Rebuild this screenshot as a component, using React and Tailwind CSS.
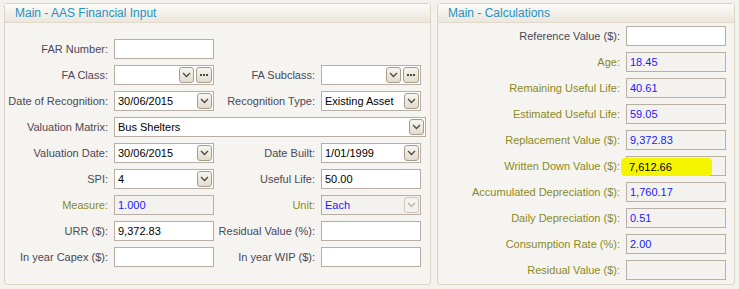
import React from "react";

const font = { fontFamily: '"Liberation Sans", Arial, sans-serif' };

// small chevron for the combo buttons
const Chevron = ({ disabled }) => (
  <svg width="9" height="6" viewBox="0 0 9 6">
    <path
      d="M1 1 L4.5 4.5 L8 1"
      fill="none"
      stroke={disabled ? "#b5b0a8" : "#4b4845"}
      strokeWidth="1.3"
    />
  </svg>
);

const DropButton = ({ disabled }) => (
  <div
    className={
      "flex h-[16px] w-[15px] items-center justify-center rounded-[3px] border " +
      (disabled
        ? "border-[#cdc6bc] bg-[#f4f2ee]"
        : "border-[#a89c8c] bg-gradient-to-b from-[#f7f5ef] to-[#e2dccf]")
    }
  >
    <Chevron disabled={disabled} />
  </div>
);

const DotsButton = () => (
  <div className="flex h-[16px] w-[16px] items-center justify-center gap-[1px] rounded-[3px] border border-[#a89c8c] bg-gradient-to-b from-[#f7f5ef] to-[#e2dccf]">
    <span className="h-[2px] w-[2px] bg-[#4b4845]"></span>
    <span className="h-[2px] w-[2px] bg-[#4b4845]"></span>
    <span className="h-[2px] w-[2px] bg-[#4b4845]"></span>
  </div>
);

const Box = ({ value, combo, dots, readonly, disabled, blue, width = "w-[100px]" }) => (
  <div
    className={
      "flex h-[20px] items-center border pl-[3px] pr-[1px] text-[11px] " +
      width +
      " " +
      (readonly || disabled
        ? "border-[#b9aea3] bg-[#f4f2ee]"
        : "border-[#b9aea3] bg-white")
    }
  >
    <span className={"flex-1 truncate " + (blue ? "text-[#1a1aff]" : "text-black")}>
      {value}
    </span>
    {combo && <DropButton disabled={disabled} />}
    {dots && (
      <>
        <span className="w-[2px]"></span>
        <DotsButton />
      </>
    )}
  </div>
);

const Label = ({ text, olive, width }) => (
  <div
    className={
      "text-right text-[11px] " +
      width +
      " " +
      (olive ? "text-[#8a8a1e]" : "text-[#4c4757]")
    }
  >
    {text}
  </div>
);

const Panel = ({ title, className, bodyClass, children }) => (
  <div
    className={
      "flex h-[282px] flex-col rounded-[3px] border border-[#dcd3c4] bg-[#f6f4f0] " +
      className
    }
  >
    <div className="flex h-[19px] shrink-0 items-center border-b border-[#e0d9cc] bg-gradient-to-b from-[#fbfaf7] to-[#ebe7dd] pl-[10px] text-[12px] text-[#2591c6]">
      {title}
    </div>
    <div className={bodyClass}>{children}</div>
  </div>
);

const leftRows = [
  [{ label: "FAR Number:", box: {} }, null],
  [
    { label: "FA Class:", box: { combo: true, dots: true } },
    { label: "FA Subclass:", box: { combo: true, dots: true } },
  ],
  [
    { label: "Date of Recognition:", box: { value: "30/06/2015", combo: true } },
    { label: "Recognition Type:", box: { value: "Existing Asset", combo: true } },
  ],
  "matrix",
  [
    { label: "Valuation Date:", box: { value: "30/06/2015", combo: true } },
    { label: "Date Built:", box: { value: "1/01/1999", combo: true } },
  ],
  [
    { label: "SPI:", box: { value: "4", combo: true } },
    { label: "Useful Life:", box: { value: "50.00" } },
  ],
  [
    { label: "Measure:", olive: true, box: { value: "1.000", readonly: true, blue: true } },
    { label: "Unit:", olive: true, box: { value: "Each", combo: true, disabled: true, blue: true } },
  ],
  [
    { label: "URR ($):", box: { value: "9,372.83" } },
    { label: "Residual Value (%):", box: {} },
  ],
  [
    { label: "In year Capex ($):", box: {} },
    { label: "In year WIP ($):", box: {} },
  ],
];

const rightRows = [
  { label: "Reference Value ($):", value: "" },
  { label: "Age:", value: "18.45", olive: true, ro: true },
  { label: "Remaining Useful Life:", value: "40.61", olive: true, ro: true },
  { label: "Estimated Useful Life:", value: "59.05", olive: true, ro: true },
  { label: "Replacement Value ($):", value: "9,372.83", olive: true, ro: true },
  { label: "Written Down Value ($):", value: "7,612.66", olive: true, ro: true, mark: true },
  { label: "Accumulated Depreciation ($):", value: "1,760.17", olive: true, ro: true },
  { label: "Daily Depreciation ($):", value: "0.51", olive: true, ro: true },
  { label: "Consumption Rate (%):", value: "2.00", olive: true, ro: true },
  { label: "Residual Value ($):", value: "", olive: true, ro: true },
];

export default function App() {
  return (
    <div
      className="flex h-[289px] w-[739px] gap-[6px] bg-[#f4f2ee] pl-[4px] pt-[3px]"
      style={font}
    >
      <Panel
        title="Main - AAS Financial Input"
        className="w-[427px]"
        bodyClass="flex flex-col gap-[6px] pt-[16px]"
      >
        {leftRows.map((row, i) =>
          row === "matrix" ? (
            <div key={i} className="flex items-center">
              <Label text="Valuation Matrix:" width="w-[103px]" />
              <span className="w-[6px]"></span>
              <Box value="Bus Shelters" combo width="w-[312px]" />
            </div>
          ) : (
            <div key={i} className="flex items-center">
              <Label text={row[0].label} olive={row[0].olive} width="w-[103px]" />
              <span className="w-[6px]"></span>
              <Box {...row[0].box} />
              {row[1] && (
                <>
                  <Label text={row[1].label} olive={row[1].olive} width="w-[101px]" />
                  <span className="w-[6px]"></span>
                  <Box {...row[1].box} />
                </>
              )}
            </div>
          )
        )}
      </Panel>

      <Panel
        title="Main - Calculations"
        className="w-[298px]"
        bodyClass="flex flex-col gap-[6px] pt-[3px]"
      >
        {rightRows.map((r) => (
          <div key={r.label} className="flex items-center">
            <Label text={r.label} olive={r.olive} width="w-[182px]" />
            <span className="w-[6px]"></span>
            <div className="relative">
              <Box value={r.mark ? "" : r.value} readonly={r.ro} blue={!r.mark} />
              {r.mark && (
                <span className="absolute left-[-5px] top-[2px] flex h-[18px] w-[91px] items-center rounded-[4px] bg-[#f6f500] pl-[8px] text-[11px] text-black">
                  {r.value}
                </span>
              )}
            </div>
          </div>
        ))}
      </Panel>
    </div>
  );
}
